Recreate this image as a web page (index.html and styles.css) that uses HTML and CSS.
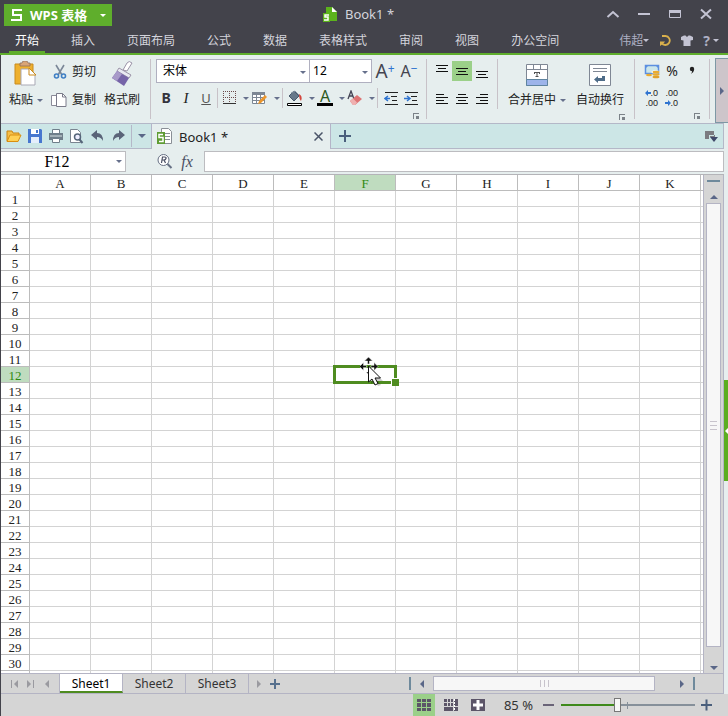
FILE: index.html
```html
<!DOCTYPE html>
<html lang="zh-CN">
<head>
	<meta charset="UTF-8">
	<meta name="viewport" content="width=device-width, initial-scale=1">
	<title>Book1 *</title>
	<link rel="stylesheet" href="styles.css">
</head>
<body>
	<header class="top">
		<div class="titlebar">
			<button class="app-btn">
				<svg width="12" height="14" viewBox="0 0 12 14"><path d="M11 2H2v5h8v5H0" fill="none" stroke="#fff" stroke-width="2"/></svg>
				<span>WPS 表格</span>
				<i class="caret"></i>
			</button>
			<div class="doc-title">
				<svg width="15" height="15" viewBox="0 0 15 15"><path d="M3 0h6l5 5v9H3z" fill="#5cb31c"/><path d="M9 0v5h5z" fill="#fff"/><path d="M0 6h7v9H0z" fill="#5cb31c"/><path d="M6 8H2v2h3v3H1" fill="none" stroke="#fff" stroke-width="1.5"/></svg>
				<span>Book1 *</span>
			</div>
			<div class="win-btns">
				<button aria-label="折叠"><svg width="14" height="12" viewBox="0 0 14 12"><path d="M1.500 9L7 4l5.500 5" fill="none" stroke="#c3c3d3" stroke-width="2"/></svg></button>
				<button aria-label="最小化"><svg width="14" height="12" viewBox="0 0 14 12"><path d="M1 5h12v2H1z" fill="#c3c3d3"/></svg></button>
				<button aria-label="最大化"><svg width="14" height="12" viewBox="0 0 14 12"><path d="M1.500 2.500h11v7h-11z" fill="none" stroke="#c3c3d3"/><path d="M1 2h12v3H1z" fill="#c3c3d3"/></svg></button>
				<button aria-label="关闭"><svg width="14" height="12" viewBox="0 0 14 12"><path d="M2 1.500l10 9M12 1.500l-10 9" stroke="#c3c3d3" stroke-width="2"/></svg></button>
			</div>
		</div>
		<div class="menubar">
			<nav class="menu">
				<a href="#" class="on">开始</a>
				<a href="#">插入</a>
				<a href="#">页面布局</a>
				<a href="#">公式</a>
				<a href="#">数据</a>
				<a href="#">表格样式</a>
				<a href="#">审阅</a>
				<a href="#">视图</a>
				<a href="#">办公空间</a>
			</nav>
			<div class="user">
				<button>伟超<i class="caret"></i></button>
				<button aria-label="同步"><svg width="12" height="12" viewBox="0 0 12 12"><path d="M3 1h3.500a4.500 4.500 0 1 1-4 7" fill="none" stroke="#d9b04c" stroke-width="1.800"/><path d="M1 11V6.500h5L4.500 8.500z" fill="#d9b04c"/></svg></button>
				<button aria-label="皮肤"><svg width="12" height="12" viewBox="0 0 12 12"><path d="M0 2l3-1.500h1.500L6 2l1.500-1.500H9L12 2v3l-2.500.500V11h-7V5.500L0 5z" fill="#c3c3d3"/></svg></button>
				<button class="help" aria-label="帮助">?<i class="caret"></i></button>
			</div>
		</div>
	</header>

	<section class="ribbon">
		<div class="group clip">
			<button class="big">
				<svg width="24" height="26" viewBox="0 0 24 26"><path d="M1 3h18v20H1z" fill="#eeb02e" stroke="#c98a1c"/><path d="M6 5V2h2l1-2h4l1 2h2v3z" fill="#d9a577" stroke="#8f6e5c" stroke-width=".8"/><path d="M7 8h8l6 6v10H7z" fill="#fff" stroke="#a9a9b5"/><path d="M15 7v7h7z" fill="#fff" stroke="#c98a1c"/></svg>
				<span>粘贴<i class="caret"></i></span>
			</button>
			<div class="pair">
				<button>
					<svg width="14" height="16" viewBox="0 0 14 16"><path d="M3 1l6 10M11 1L5 11" stroke="#7b8798" stroke-width="1.600"/><circle cx="3.500" cy="12" r="2" fill="none" stroke="#3f7fc4" stroke-width="1.600"/><circle cx="10.500" cy="12" r="2" fill="none" stroke="#3f7fc4" stroke-width="1.600"/></svg>
					<span>剪切</span>
				</button>
				<button>
					<svg width="16" height="16" viewBox="0 0 16 16"><path d="M.500 3.500h8v10h-8z" fill="#fff" stroke="#8a8a98"/><path d="M5.500 1.500h6l3.500 3.500v9.500H5.500z" fill="#fff" stroke="#7b7b8a"/><path d="M11.500 1.500V5H15" fill="none" stroke="#7b7b8a"/></svg>
					<span>复制</span>
				</button>
			</div>
			<button class="big">
				<svg width="22" height="26" viewBox="0 0 22 26"><path d="M12 9l4-7q2-3 5 0l-5 8z" fill="#fff" stroke="#9b93a8"/><path d="M8 7l12 7-2 3L6 10z" fill="#e9e9f2" stroke="#9b93a8"/><path d="M6 10l12 7-5 8L1 17z" fill="#7664a8"/><path d="M6 10l5 3-5 7-5-3z" fill="#a89ac9"/></svg>
				<span>格式刷</span>
			</button>
		</div>

		<div class="group font">
			<div class="row tall">
				<label class="combo name"><select aria-label="字体"><option>宋体</option></select></label>
				<label class="combo size"><select aria-label="字号"><option>12</option></select></label>
				<button class="grow" aria-label="增大字号">A<sup>+</sup></button>
				<button class="grow small" aria-label="减小字号">A<sup>−</sup></button>
			</div>
			<div class="row tools">
				<button class="ic bold">B</button>
				<button class="ic ital">I</button>
				<button class="ic under">U</button>
				<i class="sep"></i>
				<button class="drop" aria-label="边框"><svg width="14" height="14" viewBox="0 0 14 14"><path d="M.500 0v13M6.500 0v13M12.500 0v13M0 .500h13M0 6.500h13" stroke="#6d4a4a" stroke-dasharray="1 1"/><path d="M0 12.500h13" stroke="#333"/></svg><i class="caret"></i></button>
				<button class="drop" aria-label="绘制表格"><svg width="16" height="14" viewBox="0 0 16 14"><path d="M.500 1.500h12v11H.500zM.500 6.500h12M.500 9.500h12M4.500 2v10M8.500 2v10" fill="#fff" stroke="#7d8794"/><path d="M0 1h13v3H0z" fill="#7d8794"/><path d="M6 13l1-3 6-6 2 2-6 6z" fill="#eb962c"/></svg><i class="caret"></i></button>
				<i class="sep"></i>
				<button class="drop" aria-label="填充颜色"><svg width="16" height="16" viewBox="0 0 16 16"><path d="M2 6l5-5 5 5-5 5z" fill="#66788a" stroke="#46586a"/><path d="M4 3l4-2 4 4" fill="none" stroke="#8998a8"/><path d="M12 4q4 2 2 7-2-2-2-7" fill="#d3453c"/><path d="M.500 13.500h14v2H.500z" fill="#fff" stroke="#000"/></svg><i class="caret"></i></button>
				<button class="drop" aria-label="字体颜色"><span class="fcolor">A</span><i class="caret"></i></button>
				<button class="drop" aria-label="清除"><svg width="16" height="16" viewBox="0 0 16 16"><path d="M1 9l3-8 3 8M2 6h4" fill="none" stroke="#445" stroke-width="1.300"/><path d="M3 11l7-6 5 4-7 6H6z" fill="#dd7474"/><path d="M3 11l3-2.500 4 4L8 15H6z" fill="#efb0b0"/></svg><i class="caret"></i></button>
				<i class="sep"></i>
				<button class="ic" aria-label="减少缩进"><svg width="14" height="14" viewBox="0 0 14 14"><path d="M1 1.500h13M7 5.500h6M8 9.500h5M1 13.500h13" stroke="#222"/><path d="M1 7.500h5M4 5L1 7.500 4 10" fill="none" stroke="#2f74d0" stroke-width="1.500"/></svg></button>
				<button class="ic" aria-label="增加缩进"><svg width="14" height="14" viewBox="0 0 14 14"><path d="M1 1.500h13M7 5.500h6M8 9.500h5M1 13.500h13" stroke="#222"/><path d="M0 7.500h5M3 5l3 2.500L3 10" fill="none" stroke="#2f74d0" stroke-width="1.500"/></svg></button>
			</div>
			<button class="launch" aria-label="字体设置"></button>
		</div>

		<div class="group align">
			<div class="align-grid">
				<button class="ic" aria-label="顶端对齐"><svg width="14" height="14" viewBox="0 0 14 14"><path d="M1 1.500h12M3 4.500h8M1 7.500h12" stroke="#111"/></svg></button>
				<button class="ic on" aria-label="垂直居中"><svg width="14" height="14" viewBox="0 0 14 14"><path d="M1 4.500h12M3 7.500h8M1 10.500h12" stroke="#111"/></svg></button>
				<button class="ic" aria-label="底端对齐"><svg width="14" height="14" viewBox="0 0 14 14"><path d="M1 7.500h12M3 10.500h8M1 13.500h12" stroke="#111"/></svg></button>
				<button class="ic" aria-label="左对齐"><svg width="14" height="14" viewBox="0 0 14 14"><path d="M1 2.500h8M1 5.500h12M1 8.500h8M1 11.500h12" stroke="#111"/></svg></button>
				<button class="ic" aria-label="居中"><svg width="14" height="14" viewBox="0 0 14 14"><path d="M3 2.500h8M1 5.500h12M3 8.500h8M1 11.500h12" stroke="#111"/></svg></button>
				<button class="ic" aria-label="右对齐"><svg width="14" height="14" viewBox="0 0 14 14"><path d="M5 2.500h8M1 5.500h12M5 8.500h8M1 11.500h12" stroke="#111"/></svg></button>
			</div>
			<i class="sep high"></i>
			<div class="wraps">
				<div class="bigs">
					<button class="big">
						<svg width="24" height="26" viewBox="0 0 24 26"><path d="M1.500 3.500h21v21h-21z" fill="#fff" stroke="#7f8794"/><path d="M1.500 18.500h21v6h-21z" fill="#9db4ea" stroke="#5f84a0"/><path d="M2 8.500h20M8.500 4v4M15.500 4v4" stroke="#7f8794"/><path d="M9 11.500h6M12 11v5M10.500 15.500h3M9.500 11v2M14.500 11v2" stroke="#555"/></svg>
						<span>合并居中<i class="caret"></i></span>
					</button>
					<button class="big">
						<svg width="24" height="26" viewBox="0 0 24 26"><path d="M1.500 3.500h21v21h-21z" fill="#fff" stroke="#7f8794"/><path d="M5 7.500h14M5 10.500h14" stroke="#7f8794"/><path d="M17 15v5h-7v2l-4-3.500 4-3.500v2h4v-2z" fill="#4e6c88"/></svg>
						<span>自动换行</span>
					</button>
				</div>
				<button class="launch" aria-label="对齐设置"></button>
			</div>
		</div>

		<div class="group number">
			<div class="num-grid">
				<button class="ic" aria-label="货币"><svg width="16" height="16" viewBox="0 0 16 16"><path d="M1.500 2.500h13v8h-13z" fill="#cbe6ea" stroke="#5b8fe0" stroke-width="1.500"/><path d="M1 2h4L1 6zM15 2h-4l4 4z" fill="#5b8fe0"/><ellipse cx="11.500" cy="9" rx="4" ry="1.700" fill="#fff"/><ellipse cx="12" cy="9" rx="3.500" ry="1.300" fill="#e9ab30"/><ellipse cx="12" cy="11.500" rx="3.500" ry="1.300" fill="#e9ab30"/><ellipse cx="12" cy="14" rx="3.500" ry="1.300" fill="#e0a02a"/><ellipse cx="5" cy="12" rx="3" ry="1.300" fill="#e9ab30"/></svg></button>
				<button class="ic pct">%</button>
				<button class="ic" aria-label="千位分隔"><svg width="8" height="16" viewBox="0 0 8 16"><circle cx="4" cy="6" r="2.200" fill="#222"/><path d="M6.200 6q0 3-3.200 5 1.500-2 1-4z" fill="#222"/></svg></button>
				<button class="ic dec" aria-label="增加小数位"><span><svg width="6" height="6" viewBox="0 0 6 6"><path d="M0 3l3-3v2h3v2H3v2z" fill="#2f74d0"/></svg>.0</span><span>.00</span></button>
				<button class="ic dec" aria-label="减少小数位"><span>.00</span><span><svg width="6" height="6" viewBox="0 0 6 6"><path d="M6 3L3 0v2H0v2h3v2z" fill="#2f74d0"/></svg>.0</span></button>
			</div>
			<button class="launch" aria-label="数字设置"></button>
		</div>
		<button class="more" aria-label="更多"><i class="tri right"></i></button>
	</section>

	<main class="work">
		<div class="book">
			<div class="docbar">
				<div class="quick">
					<button aria-label="打开"><svg width="16" height="14" viewBox="0 0 16 14"><path d="M1 12V2h5l1 2h6v3" fill="#f5c04a" stroke="#c98410"/><path d="M1 12.500L4 6h11l-3 6.500z" fill="#ffd054" stroke="#d98e10"/></svg></button>
					<button aria-label="保存"><svg width="14" height="14" viewBox="0 0 14 14"><path d="M0 0h13l1 1v13H0z" fill="#4777cf"/><path d="M3 0h8v5H3z" fill="#fff"/><path d="M3 8h8v6H3z" fill="#e4eefc"/><path d="M8 1h2v3H8z" fill="#4777cf"/></svg></button>
					<button aria-label="打印"><svg width="14" height="14" viewBox="0 0 14 14"><path d="M3.500.500h7v4h-7z" fill="#fff" stroke="#6f7f8a"/><path d="M0 4h14v7H0z" fill="#6f7f8a"/><path d="M1 7h12" stroke="#d8e4e4"/><path d="M3.500 9.500h7v4h-7z" fill="#fff" stroke="#6f7f8a"/></svg></button>
					<button aria-label="打印预览"><svg width="14" height="15" viewBox="0 0 14 15"><path d="M.500.500h7l3 3v10H.500z" fill="#fff" stroke="#7a8490"/><circle cx="7.500" cy="8" r="3" fill="#eef" stroke="#56667a" stroke-width="1.500"/><path d="M9.500 10.500l3 3.500" stroke="#56667a" stroke-width="2"/></svg></button>
					<button aria-label="撤销"><svg width="13" height="12" viewBox="0 0 13 12"><path d="M0 5l6-5v3q6 0 6 8-2-4-6-4v3z" fill="#5a6478"/></svg></button>
					<button aria-label="恢复"><svg width="13" height="12" viewBox="0 0 13 12"><path d="M13 5L7 0v3q-6 0-6 8 2-4 6-4v3z" fill="#5a6478"/></svg></button>
					<button class="more-q" aria-label="自定义"><i class="tri down"></i></button>
				</div>
				<div class="doc-tab">
					<svg width="17" height="17" viewBox="0 0 17 17"><path d="M5.500.500h7l3 3v12h-10z" fill="#fff" stroke="#8a8f96"/><path d="M8 5.500h6M8 8.500h6M8 11.500h6" stroke="#8a8f96"/><path d="M1 4h8v12H1z" fill="#5f9c34"/><path d="M7 6.500H3v3h4v4H3" fill="none" stroke="#fff" stroke-width="1.500"/></svg>
					<span>Book1 *</span>
					<button aria-label="关闭文档"><svg width="9" height="9" viewBox="0 0 9 9"><path d="M.500.500l8 8M8.500.500l-8 8" stroke="#4a5468" stroke-width="1.500"/></svg></button>
				</div>
				<button class="new-doc" aria-label="新建"><svg width="12" height="12" viewBox="0 0 12 12"><path d="M0 6h12M6 0v12" stroke="#4a5f7c" stroke-width="2"/></svg></button>
				<button class="tab-list" aria-label="文档列表"><svg width="13" height="13" viewBox="0 0 13 13"><path d="M0 1h9v4H4v4H0z" fill="#7b7b80"/><path d="M5 6h4V5h1v2H5z" fill="#7b7b80"/><path d="M5 7h8l-4 5z" fill="#3f4868"/></svg></button>
			</div>

			<div class="formula">
				<div class="namebox">
					<input type="text" value="F12" aria-label="名称框">
					<button aria-label="名称列表"><i class="caret"></i></button>
				</div>
				<button aria-label="浏览"><svg width="16" height="15" viewBox="0 0 16 15"><circle cx="6.500" cy="6" r="5.500" fill="#fff" stroke="#667084"/><path d="M4.500 9l1-6h2q2 0 1.500 1.500T7 6H5.500M7 6l1.500 3" fill="none" stroke="#4a5064" stroke-width="1.200"/><path d="M10.500 10l4 4" stroke="#667084" stroke-width="2"/></svg></button>
				<button class="fx">fx</button>
				<input class="fx-input" type="text" aria-label="编辑栏">
			</div>

			<div class="sheet-area">
				<div class="sheet"><table id="grid" class="grid"></table></div>
				<div class="vscroll">
					<i class="split"></i>
					<button aria-label="向上"><i class="tri up"></i></button>
					<div class="thumb"></div>
					<button aria-label="向下"><i class="tri down"></i></button>
				</div>
			</div>

			<div class="tabs">
				<div class="nav">
					<button aria-label="第一个"><i class="bar"></i><i class="tri left"></i></button>
					<button aria-label="最后一个"><i class="tri right"></i><i class="bar"></i></button>
					<button aria-label="上一个"><i class="tri left"></i></button>
				</div>
				<button class="tab on">Sheet1</button>
				<button class="tab">Sheet2</button>
				<button class="tab">Sheet3</button>
				<button class="next" aria-label="下一个"><i class="tri right"></i></button>
				<button class="add" aria-label="新建工作表"><svg width="10" height="10" viewBox="0 0 10 10"><path d="M0 5h10M5 0v10" stroke="#56708e" stroke-width="2"/></svg></button>
				<div class="hscroll">
					<i class="split"></i>
					<button aria-label="向左"><i class="tri left"></i></button>
					<div class="track"><div class="thumb"></div></div>
					<button aria-label="向右"><i class="tri right"></i></button>
					<i class="split"></i>
				</div>
			</div>
		</div>
		<aside class="side"><button aria-label="任务窗格"><i class="tri left"></i></button></aside>
	</main>

	<footer class="status">
		<button class="view on" aria-label="普通视图"><svg width="14" height="12" viewBox="0 0 14 12"><path d="M0 0h14v12H0z" fill="#5c5568"/><path d="M0 3.500h14M0 8.500h14M4.500 0v12M9.500 0v12" stroke="#9bd089"/></svg></button>
		<button class="view" aria-label="分页预览"><svg width="14" height="12" viewBox="0 0 14 12"><path d="M0 0h14v12H0z" fill="#5c5568"/><path d="M0 3.500h9M0 7.500h14M3.500 0v7M6.500 0v7M9.500 0v12" stroke="#d5d5d5"/><path d="M10.500 0v12" stroke="#fff" stroke-dasharray="2 1"/></svg></button>
		<button class="view" aria-label="阅读模式"><svg width="14" height="12" viewBox="0 0 14 12"><path d="M0 0h14v12H0z" fill="#5c5568"/><path d="M2 6h10M7 1v10" stroke="#fff" stroke-width="3"/></svg></button>
		<label class="pct-text" for="zoom">85 %</label>
		<button aria-label="缩小"><svg width="11" height="12" viewBox="0 0 11 12"><path d="M0 6h11" stroke="#6a6478" stroke-width="2"/></svg></button>
		<input id="zoom" class="zoom" type="range" min="0" max="100" value="42">
		<button aria-label="放大"><svg width="11" height="12" viewBox="0 0 11 12"><path d="M0 6h11M5.500 .500v11" stroke="#4a5f7c" stroke-width="2"/></svg></button>
	</footer>
	<script src="sheet.js"></script>
</body>
</html>
```

FILE: styles.css
```css
* {
	box-sizing: border-box;
}
body {
	margin: 0;
	height: 100vh;
	display: flex;
	flex-direction: column;
	overflow: hidden;
	background: #43434b;
	color: #222;
	font: 12px/16px "Noto Sans", "Noto Sans CJK SC", sans-serif;
}
button, input, select {
	font: inherit;
	color: inherit;
	margin: 0;
	padding: 0;
	border: 0;
	background: none;
}
button {
	display: flex;
	align-items: center;
	justify-content: center;
	flex: none;
	white-space: nowrap;
}
svg { display: block; flex: none;}

/* small arrows */
.caret { display: inline-block; flex: none; border: 3px solid transparent; border-top-color: #66708c; border-bottom: 0;}
.tri { display: block; flex: none; width: 0; height: 0; border: 4px solid transparent; color: #5a6788;}
.tri.up { border-bottom-color: currentColor; border-top: 0;}
.tri.down { border-top-color: currentColor; border-bottom: 0;}
.tri.left { border-right-color: currentColor; border-left: 0;}
.tri.right { border-left-color: currentColor; border-right: 0;}

/* title and menu */
.top {
	flex: none;
	color: #d4d4dc;
	border-bottom: 2px solid #5fae2c;
}
.titlebar { display: grid; grid-template-columns: 1fr auto 1fr; align-items: center; height: 28px; padding: 0 15px 0 4px;}
.app-btn { justify-self: start; margin-top: 2px; height: 22px; padding: 0 6px 0 7px; gap: 7px; background: #5fae2c; color: #fff; font-size: 13px; font-weight: bold;}
.app-btn .caret { border-top-color: #fff; margin-left: 6px;}
.doc-title { display: flex; align-items: center; gap: 7px; font-size: 13px;}
.win-btns { justify-self: end; display: flex; gap: 17px;}
.menubar { display: flex; justify-content: space-between; height: 25px; padding: 0 9px;}
.menu { display: flex; gap: 20px;}
.menu a { padding: 5px 6px 0; color: inherit; text-decoration: none; white-space: nowrap; border-bottom: 2px solid transparent;}
.menu .on { color: #fff; border-bottom-color: #5fae2c;}
.user { display: flex; align-items: center; gap: 10px; color: #aeb0c4;}
.user .caret { border-top-color: #c3c3d3;}
.user .help { gap: 3px; font-size: 14px; font-weight: bold;}

/* ribbon */
.ribbon {
	flex: none;
	display: flex;
	height: 68px;
	padding-top: 3px;
	margin-left: 1px;
	background: #e6eeee;
}
.group { display: flex; margin: 1px 0 4px; border-right: 1px solid #c8c2c8;}
.sep { width: 1px; height: 20px; background: #c8c2c8; flex: none;}
.sep.high { height: 50px;}
.big { flex-direction: column; justify-content: flex-start; gap: 5px; height: 50px; padding-top: 2px;}
.big span { display: flex; align-items: center; gap: 4px;}
.clip { gap: 8px; padding: 0 10px 0 8px;}
.pair { display: flex; flex-direction: column; gap: 8px; padding-top: 3px;}
.pair button { gap: 5px; height: 20px; justify-content: flex-end;}
.font { flex-direction: column; padding: 0 5px;}
.row { display: flex; align-items: center;}
.row.tall { height: 24px;}
.combo { position: relative; height: 24px; border: 1px solid #b0b0c0; background: #fff;}
.combo::after { content: ""; position: absolute; right: 3px; top: 11px; border: 3px solid transparent; border-top-color: #66708c; border-bottom: 0; pointer-events: none;}
.combo select { appearance: none; width: 100%; height: 22px; padding-left: 6px; color: #000;}
.combo.name { width: 154px;}
.combo.size { width: 62px; border-left: 0;}
.combo.size select { padding-left: 3px;}
.grow { width: 26px; font-size: 19px; color: #444450;}
.grow.small { width: 22px; font-size: 16px;}
.grow sup { font-size: 12px; line-height: 12px; color: #2f74d0; align-self: flex-start;}
.tools { height: 20px; margin-top: 5px;}
.tools .sep { margin: 0 3px 0 1px;}
.ic { width: 20px; height: 20px;}
.drop { width: 30px; height: 20px; gap: 6px;}
.bold { font-size: 14px; font-weight: bold; color: #33333c;}
.ital { font: italic 15px "Liberation Serif", serif;}
.under { font-size: 13px; text-decoration: underline; color: #555;}
.fcolor { width: 16px; height: 16px; border-bottom: 3px solid #000; color: #2d5a1e; font-size: 16px; line-height: 12px;}
.launch { width: 6px; height: 6px; border: solid #7b8288; border-width: 1px 0 0 1px; align-self: flex-end; margin: 5px 2px 0 0; background: linear-gradient(#7b8288, #7b8288) right bottom / 3px 3px no-repeat;}
.align { padding: 0 7px 0 5px;}
.align-grid { display: grid; grid-template-columns: repeat(3, 20px); grid-template-rows: 20px 20px; row-gap: 8px; padding-top: 2px; margin-right: 5px; align-content: start;}
.ic.on, .view.on { background: #9bd089;}
.wraps, .number { display: flex; flex-direction: column;}
.bigs { display: flex; gap: 10px; padding: 0 3px 0 10px;}
.number { padding: 0 7px;}
.num-grid { display: grid; grid-template-columns: repeat(3, 20px); grid-template-rows: 24px 20px; row-gap: 5px; align-items: center;}
.pct { font-size: 14px;}
.dec { flex-direction: column; align-items: flex-end; padding-right: 4px; font: 9px/10px "Liberation Sans", sans-serif;}
.dec span { display: flex; align-items: center;}
.more { margin-left: auto; width: 13px; height: 65px; border: 1px solid #7d98a5; border-right: 0; background: #cdc5ca;}

/* workbook */
.work { flex: 1; min-height: 0; display: flex; margin-left: 1px; background: #e6eeee;}
.book { flex: 1; min-width: 0; display: flex; flex-direction: column;}
.docbar { flex: none; display: flex; height: 26px; background: #cce6e6; border: solid #b4b8c8; border-width: 1px 1px 1px 0;}
.quick { display: flex; align-items: center; width: 151px; border-right: 1px solid #b4b4c8;}
.quick button { width: 21px; height: 22px;}
.quick button:first-child { margin-left: 2px;}
.quick .more-q { width: 20px; margin-left: auto; border-left: 1px solid #b4b8c8;}
.doc-tab { display: flex; align-items: center; width: 179px; gap: 6px; padding: 0 7px 0 4px; margin-bottom: -1px; background: #e6eeee; border-right: 1px solid #b4b4c8; font-size: 13px;}
.doc-tab button { margin-left: auto;}
.new-doc { margin-left: 8px;}
.tab-list { margin: 0 5px 0 auto;}
.formula { flex: none; display: flex; align-items: center; height: 25px;}
.namebox { display: flex; width: 125px; height: 21px; background: #fff; border: 1px solid #bcbcc0; border-left: 0; margin-right: 31px;}
.namebox input { flex: 1; min-width: 0; text-align: center; font: 16px "Liberation Serif", "Noto Sans CJK SC", serif; color: #000;}
.namebox button { width: 12px;}
.fx { width: 28px; margin-right: 3px; font: italic 16px/16px "Liberation Serif", serif; color: #4a5064;}
.fx-input { flex: 1; min-width: 0; height: 21px; background: #fff; border: 1px solid #bcbcc0;}

.sheet-area { flex: 1; min-height: 0; display: flex; border-top: 1px solid #b4b4b8;}
.sheet { flex: 1; min-width: 0; overflow: hidden; background: #fff; border-right: 1px solid #b4b4c4;}
.grid { table-layout: fixed; width: 0; border-collapse: separate; border-spacing: 0;}
.grid th, .grid td { width: 61px; height: 16px; padding: 0; border: solid #d3d3d3; border-width: 0 1px 1px 0;}
.grid th { padding-top: 2px; border-color: #bcbcbc; font: 13px/13px "Liberation Serif", serif; color: #222; overflow: hidden;}
.grid tr > th:first-child { width: 29px;}
.grid .hot { background: #bfdcbf; color: #2f8a10;}
.grid td.cur { position: relative;}
.cur .box { position: absolute; inset: -2px; border: 3px solid #4f8c20;}
.cur .box::after { content: ""; position: absolute; right: -5px; bottom: -5px; width: 7px; height: 7px; background: #4f8c20; border: solid #fff; border-width: 1px 0 0 1px;}
.cur .pointer { position: absolute; left: 25px; top: -10px; z-index: 2;}

.vscroll { flex: none; display: flex; flex-direction: column; align-items: center; width: 20px; padding-top: 5px; background: #d5d5d5; border-right: 1px solid #b4b4c4;}
.vscroll .split { width: 13px; height: 2px; background: #6f8a9c;}
.vscroll button { height: 7px; margin: 11px 0 3px;}
.vscroll button:last-child { margin: 17px 0 2px;}
.thumb { border: 1px solid #b4b4c4; background: #f7f7f7;}
.vscroll .thumb { flex: 1; width: 15px; background: repeating-linear-gradient(#c8c4cc 0 1px, #f7f7f7 1px 4px) center / 7px 9px no-repeat #f7f7f7;}

.tabs { flex: none; display: flex; height: 21px; background: #d5d5d5; border: solid #b4b4c4; border-width: 1px 1px 1px 0;}
.tabs .nav { display: flex; align-items: center; gap: 9px; width: 59px; padding-left: 8px; border-right: 1px solid #b4b4c4;}
.nav .tri, .next .tri { color: #9a9aa0;}
.nav .bar { width: 1px; height: 8px; background: #9a9aa0; margin: 0 2px;}
.tab { width: 63px; border-right: 1px solid #b4b4c4; color: #333;}
.tab.on { padding-top: 2px; background: #fff; border-bottom: 2px solid #4f8c20; color: #000;}
.next { margin-left: 8px;}
.add { margin-left: 9px;}
.hscroll { display: flex; align-items: center; width: 286px; margin-left: auto; margin-right: 28px; gap: 9px;}
.hscroll .split { width: 2px; height: 13px; background: #6f8a9c;}
.hscroll button { width: 4px;}
.hscroll .track { flex: 1; padding-right: 16px;}
.hscroll .thumb { height: 15px; background: repeating-linear-gradient(90deg, #c8c4cc 0 1px, #f7f7f7 1px 4px) center / 9px 7px no-repeat #f7f7f7;}

.side { flex: none; display: flex; align-items: center; width: 4px;}
.side button { width: 4px; height: 101px; margin-top: 44px; background: #5cae20; justify-content: flex-end;}
.side .tri { border-width: 3px 3px 3px 0; color: #fff;}

/* status */
.status { flex: none; display: flex; align-items: center; justify-content: flex-end; height: 22px; margin-left: 1px; padding-right: 16px; background: #d5d5d5;}
.view { width: 22px; height: 22px; margin-right: 5px;}
.pct-text { margin: 0 10px; font-size: 13px; color: #333;}
.zoom { appearance: none; width: 134px; height: 14px; margin: 0 6px 0 7px; background: linear-gradient(#86909a, #86909a) 66px 50% / 1px 7px no-repeat;}
.zoom::-webkit-slider-runnable-track { height: 2px; background: linear-gradient(90deg, #3f8a1c 42%, #86909a 42%);}
.zoom::-webkit-slider-thumb { appearance: none; width: 7px; height: 14px; margin-top: -6px; background: #f7f7f7; border: 1px solid #777;}
```

FILE: sheet.js
```js
var cols = ["A", "B", "C", "D", "E", "F", "G", "H", "I", "J", "K", ""];
var rowCount = 31;
var active = { col: "F", row: 12 };

// cell cursor with the move arrows
var pointer = '<svg class="pointer" width="26" height="30" viewBox="0 0 26 30">' +
	'<path d="M8.500 0l4 4H9.500v3h-2V4h-3zM-.500 9.500l4-4v3h3v2h-3v3zM18 9.500l-4-4v3h-3v2h3v3zM6 15h3v3z" fill="#111" stroke="#fff" stroke-width=".5"/>' +
	'<path d="M11 12l12 12h-5l3 4-3 1-3-5-4 3z" fill="#000" opacity=".2"/>' +
	'<path d="M8.500 9v16l3.500-3 3 6 3-1.500-3-5.500h5.500z" fill="#fff" stroke="#111"/></svg>';

var html = "<tr><th></th>";
for (var i = 0; i < cols.length; i++) {
	html += '<th' + (cols[i] == active.col ? ' class="hot"' : '') + '>' + cols[i] + '</th>';
}
html += "</tr>";

for (var r = 1; r <= rowCount; r++) {
	// the last row only shows its top edge
	html += '<tr><th' + (r == active.row ? ' class="hot"' : '') + '>' + (r < rowCount ? r : "") + '</th>';
	for (var c = 0; c < cols.length; c++) {
		if (r == active.row && cols[c] == active.col) {
			html += '<td class="cur"><div class="box"></div>' + pointer + '</td>';
		} else {
			html += '<td></td>';
		}
	}
	html += '</tr>';
}
document.getElementById("grid").innerHTML = html;
```
